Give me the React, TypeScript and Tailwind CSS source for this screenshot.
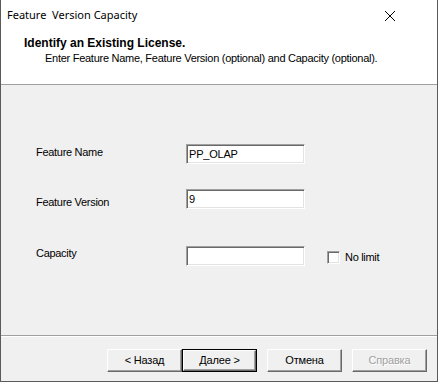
import React from "react";

const ui = { fontFamily: '"Liberation Sans", Arial, sans-serif' };

type FieldRowProps = {
  label: string;
  value: string;
  labelOffset: string;
  top: string;
  children?: React.ReactNode;
};

const FieldRow = ({ label, value, labelOffset, top, children }: FieldRowProps) => {
  return (
    <div className={`flex items-start ${top}`}>
      <div className={`w-[150px] pl-[35px] box-content text-[11px] tracking-[-0.3px] leading-[13px] text-black ${labelOffset}`}>
        {label}
      </div>
      <div className="w-[119px] h-[20px] bg-white border border-t-[#a0a0a0] border-l-[#a0a0a0] border-b-white border-r-white shadow-[inset_1px_1px_0_#696969,inset_-1px_-1px_0_#e3e3e3] px-[2px] text-[11px] tracking-[-0.2px] leading-[18px] text-black">
        {value}
      </div>
      {children}
    </div>
  );
};

type ButtonProps = {
  label: string;
  primary?: boolean;
  disabled?: boolean;
  className?: string;
};

const DialogButton = ({ label, primary, disabled, className = "" }: ButtonProps) => {
  return (
    <div
      className={`w-[75px] h-[23px] ${primary ? "border border-black" : ""} ${className}`}
    >
      <div
        className={`w-full h-full flex items-center justify-center bg-[#f0f0f0] border border-t-white border-l-white border-b-[#696969] border-r-[#696969] shadow-[inset_-1px_-1px_0_#a0a0a0] text-[11px] tracking-[-0.2px] ${
          disabled ? "text-[#a0a0a0] [text-shadow:1px_1px_0_#fff]" : "text-black"
        }`}
      >
        {label}
      </div>
    </div>
  );
};

export default function App() {
  return (
    <div className="w-[439px] h-[383px] bg-white" style={ui}>
      <div className="w-[438px] h-[382px] flex flex-col bg-[#f0f0f0] border-l border-r border-b border-[#5a5a5a]">
        {/* title bar */}
        <div className="h-[30px] shrink-0 bg-white flex items-center justify-between pl-[6px] pr-[42px]">
          <span className="text-[11px] whitespace-pre text-black" style={{ fontFamily: '"Noto Sans", "Open Sans", sans-serif' }}>
            Feature  Version Capacity
          </span>
          <svg width="10" height="10" viewBox="0 0 10 10" className="mt-[1px]">
            <path d="M0 0 L10 10 M10 0 L0 10" stroke="#000" strokeWidth="1" />
          </svg>
        </div>

        {/* header */}
        <div className="h-[55px] shrink-0 bg-white pt-[6px] border-b border-[#a0a0a0]">
          <div className="pl-[23px] text-[12px] leading-[14px] font-bold text-black">
            Identify an Existing License.
          </div>
          <div className="pl-[44px] mt-[2px] text-[11px] tracking-[-0.27px] leading-[13px] text-black">
            Enter Feature Name, Feature Version (optional) and Capacity (optional).
          </div>
        </div>

        {/* body */}
        <div className="h-[250px] shrink-0 flex flex-col">
          <FieldRow label="Feature Name" value="PP_OLAP" top="mt-[59px]" labelOffset="mt-[2px]" />
          <FieldRow label="Feature Version" value="9" top="mt-[25px]" labelOffset="mt-[7px]" />
          <FieldRow label="Capacity" value="" top="mt-[37px]" labelOffset="mt-[1px]">
            <div className="flex items-center ml-[22px] mt-[5px]">
              <div className="w-[13px] h-[13px] bg-white border border-t-[#a0a0a0] border-l-[#a0a0a0] border-b-white border-r-white shadow-[inset_1px_1px_0_#696969,inset_-1px_-1px_0_#e3e3e3]" />
              <span className="ml-[5px] text-[11px] tracking-[-0.3px] leading-[13px] text-black">No limit</span>
            </div>
          </FieldRow>
        </div>

        {/* footer */}
        <div className="flex-1 border-t border-[#a0a0a0]">
          <div className="border-t border-white h-full pt-[12px] flex items-start pl-[106px]">
            <DialogButton label="< Назад" />
            <DialogButton label="Далее >" primary />
            <DialogButton label="Отмена" className="ml-[10px]" />
            <DialogButton label="Справка" disabled className="ml-[10px]" />
          </div>
        </div>
      </div>
    </div>
  );
}
